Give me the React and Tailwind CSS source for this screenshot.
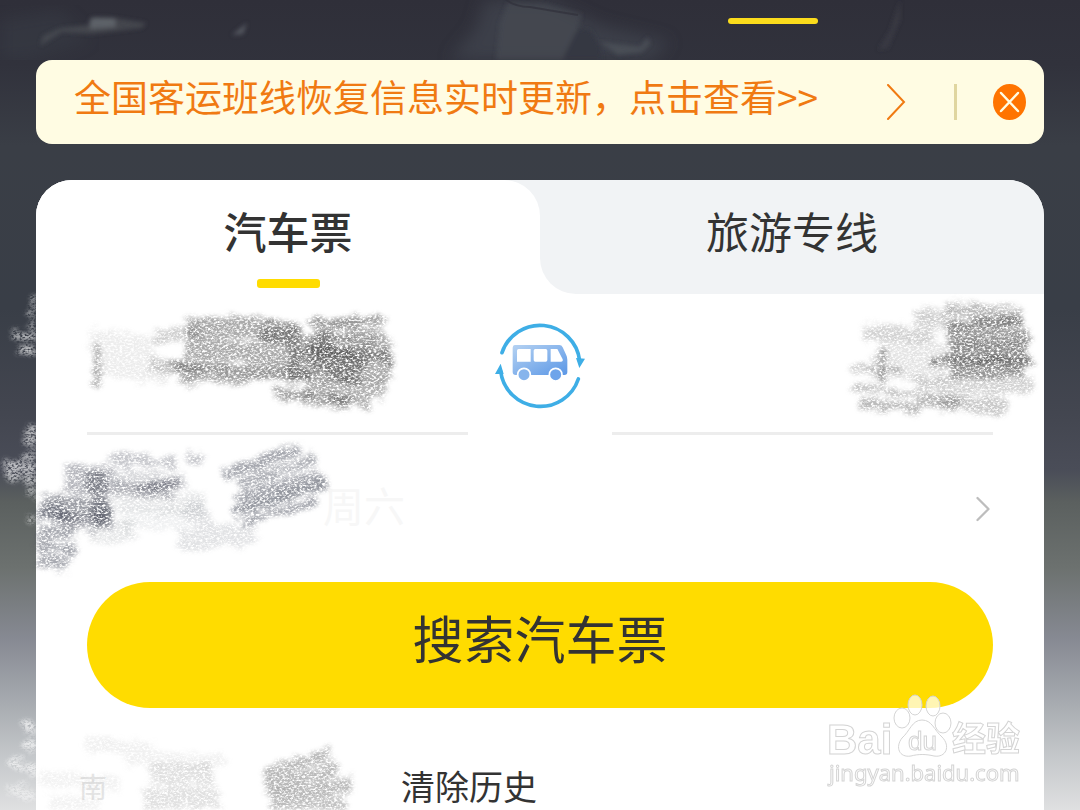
import { useState } from "react"
import { ChevronRight } from "lucide-react"

const leftStrokes = [
    // departure city
    { d: "M97 345 L97 388", w: 6, c: "#555", o: 0.5 },
    { d: "M90 342 L155 350 M95 362 L170 372", w: 26, c: "#777", o: 0.13 },
    { d: "M155 338 L200 332 M150 365 L200 372", w: 14, c: "#777", o: 0.35 },
    { d: "M186 330 L245 326 L300 336", w: 22, c: "#555", o: 0.5 },
    { d: "M186 350 L240 350 L300 365", w: 20, c: "#555", o: 0.5 },
    { d: "M172 366 L250 371 L310 378", w: 12, c: "#444", o: 0.55 },
    { d: "M180 379 L250 380", w: 8, c: "#555", o: 0.5 },
    { d: "M262 332 L310 345 L390 350", w: 24, c: "#444", o: 0.45 },
    { d: "M290 362 L392 366", w: 34, c: "#444", o: 0.45 },
    { d: "M312 351 L362 374", w: 30, c: "#444", o: 0.5 },
    { d: "M275 393 L350 403", w: 12, c: "#555", o: 0.55 },
    { d: "M305 386 L385 390", w: 18, c: "#555", o: 0.45 },
    { d: "M330 398 L370 404", w: 12, c: "#555", o: 0.45 },
    { d: "M312 324 L384 322", w: 10, c: "#444", o: 0.55 },
    { d: "M312 335 L384 335", w: 9, c: "#555", o: 0.5 },
    // travel date
    { d: "M65 473 L112 475 M66 486 L170 490", w: 15, c: "#4d5160", o: 0.4 },
    { d: "M108 459 L176 463 M186 459 L202 459", w: 12, c: "#4d5160", o: 0.32 },
    { d: "M110 476 L185 480", w: 14, c: "#4d5160", o: 0.22 },
    { d: "M138 487 L180 485", w: 9, c: "#3d4150", o: 0.45 },
    { d: "M94 470 L104 524", w: 18, c: "#2f3342", o: 0.4 },
    { d: "M42 506 L112 510", w: 22, c: "#3d4150", o: 0.5 },
    { d: "M60 520 L112 524", w: 14, c: "#3d4150", o: 0.45 },
    { d: "M36 510 L70 515 M36 530 L75 532 M36 545 L76 550 M40 561 L68 563", w: 13, c: "#505462", o: 0.5 },
    { d: "M115 498 L205 505 M90 532 L135 530", w: 24, c: "#70747f", o: 0.16 },
    { d: "M120 518 L190 520", w: 22, c: "#70747f", o: 0.1 },
    { d: "M192 505 L212 540 M180 542 L255 532", w: 22, c: "#70747f", o: 0.2 },
    { d: "M226 475 L300 449", w: 12, c: "#4d5160", o: 0.5 },
    { d: "M238 485 L316 460", w: 11, c: "#4d5160", o: 0.45 },
    { d: "M236 499 L322 474", w: 12, c: "#4d5160", o: 0.5 },
    { d: "M232 513 L326 484", w: 11, c: "#3d4150", o: 0.55 },
    { d: "M241 523 L318 500", w: 8, c: "#4d5160", o: 0.5 },
    // search history
    { d: "M86 745 L150 748 M125 758 L225 762", w: 14, c: "#888", o: 0.12 },
    { d: "M150 776 L212 774 M142 800 L218 797", w: 22, c: "#777", o: 0.22 },
    { d: "M40 778 L120 785 M50 800 L100 806", w: 16, c: "#999", o: 0.12 },
    { d: "M264 776 L330 752", w: 12, c: "#666", o: 0.45 },
    { d: "M266 787 L340 768", w: 14, c: "#666", o: 0.45 },
    { d: "M272 798 L352 784", w: 15, c: "#666", o: 0.45 },
    { d: "M270 812 L346 802", w: 14, c: "#666", o: 0.4 },
    // light marks over the backdrop
    { d: "M30 301 L36 299 M28 311 L36 313 M30 326 L36 326", w: 9, c: "#fff", o: 0.6 },
    { d: "M11 336 L36 337 M18 350 L36 350", w: 7, c: "#fff", o: 0.65 },
    { d: "M27 433 L36 430 M22 442 L36 441 M23 457 L36 457", w: 10, c: "#fff", o: 0.6 },
    { d: "M3 463 L36 471", w: 9, c: "#fff", o: 0.65 },
    { d: "M8 475 L36 481 M29 491 L36 493 M28 518 L36 521", w: 8, c: "#fff", o: 0.6 },
    { d: "M24 723 L36 733 M22 742 L36 748 M10 762 L36 772", w: 9, c: "#fff", o: 0.7 },
    { d: "M8 788 L36 795", w: 11, c: "#fff", o: 0.5 },
]

// drawn in a 240 wide box that hangs on the right edge
const rightStrokes = [
    { d: "M24 333 L95 335", w: 15, c: "#777", o: 0.32 },
    { d: "M73 317 L110 320", w: 16, c: "#666", o: 0.32 },
    { d: "M108 309 L182 314", w: 14, c: "#555", o: 0.4 },
    { d: "M108 325 L182 322", w: 11, c: "#333", o: 0.6 },
    { d: "M108 337 L190 337", w: 15, c: "#444", o: 0.55 },
    { d: "M112 352 L188 352", w: 17, c: "#333", o: 0.55 },
    { d: "M90 362 L194 362", w: 8, c: "#333", o: 0.6 },
    { d: "M110 373 L184 371", w: 13, c: "#444", o: 0.55 },
    { d: "M36 350 L110 355 M30 366 L105 372", w: 24, c: "#777", o: 0.2 },
    { d: "M43 347 L43 382", w: 6, c: "#444", o: 0.5 },
    { d: "M10 368 L60 370 M12 387 L75 395", w: 8, c: "#555", o: 0.35 },
    { d: "M75 386 L192 385", w: 16, c: "#777", o: 0.32 },
    { d: "M20 403 L80 408 M75 400 L120 404", w: 11, c: "#555", o: 0.42 },
    { d: "M100 402 L167 407", w: 17, c: "#666", o: 0.35 },
]

const Smudge = ({ strokes, className, width }) => {
    return (
        <svg className={className} viewBox={`0 0 ${width} 810`} fill="none" aria-hidden="true">
            <g filter="url(#chalk)">
                {
                    strokes.map((s, i) => {
                        return <path key={i} d={s.d} stroke={s.c} strokeWidth={s.w} strokeOpacity={s.o} strokeLinejoin="round" />
                    })
                }
            </g>
        </svg>
    )
}

const ChalkFilter = () => (
    <svg className="absolute h-0 w-0" aria-hidden="true">
        <filter id="chalk" x="0" y="0" width="1080" height="810" filterUnits="userSpaceOnUse" colorInterpolationFilters="sRGB">
            <feTurbulence type="fractalNoise" baseFrequency="0.06 0.25" numOctaves="3" seed="4" result="wave" />
            <feDisplacementMap in="SourceGraphic" in2="wave" scale="18" xChannelSelector="R" yChannelSelector="G" result="rough" />
            <feGaussianBlur in="rough" stdDeviation="2" result="soft" />
            <feTurbulence type="fractalNoise" baseFrequency="0.35 0.55" numOctaves="4" seed="9" />
            <feColorMatrix values="0 0 0 0 0  0 0 0 0 0  0 0 0 0 0  3.2 0 0 0 -0.85" result="grain" />
            <feComposite in="soft" in2="grain" operator="in" />
        </filter>
    </svg>
)

const Backdrop = () => (
    <svg className="absolute left-0 top-0 -z-10 h-[60px] w-full" viewBox="0 0 1080 60" preserveAspectRatio="xMidYMin slice" aria-hidden="true">
        <defs>
            <filter id="mist"><feGaussianBlur stdDeviation="2" /></filter>
            <filter id="haze"><feGaussianBlur stdDeviation="8" /></filter>
        </defs>
        <path d="M0 20 L60 10 L90 40 L30 60 L0 60Z" fill="#3b4148" opacity=".4" filter="url(#haze)" />
        <path d="M450 60 L476 28 L484 0 L550 0 L600 25 L670 42 L650 60Z" fill="#454952" opacity=".6" filter="url(#haze)" />
        <g filter="url(#mist)">
            <path d="M496 60 L500 22 L508 2 L545 4 L582 14 L576 34 L562 60Z" fill="#4a4f58" opacity=".5" />
            <path d="M578 28 L590 30 L600 46 L602 60 L562 60Z" fill="#343842" />
            <path d="M600 42 L640 47 L648 37 L650 44 L642 52 L618 55Z" fill="#50545d" opacity=".7" />
            <path d="M40 46 L43 36 L60 28 L88 25 L94 17 L116 18 L146 23 L142 28 L92 34 L62 32Z" fill="#4b4e56" opacity=".7" />
            <path d="M90 18 L115 18 L116 27 L90 29Z" fill="#6a6d74" opacity=".7" />
            <path d="M232 35 L247 23 L243 34Z" fill="#555861" />
            <path d="M900 0 L890 30 L878 50 L888 48 L900 20Z" fill="#40424c" opacity=".5" />
        </g>
        <path d="M506 0 Q516 7 530 7 L578 15" stroke="#30313b" strokeWidth="2" fill="none" opacity=".7" />
    </svg>
)

const SwapIcon = () => (
    <svg width="140" height="130" viewBox="0 0 420 390" fill="none" aria-hidden="true">
        <defs>
            <linearGradient id="bus" x1="0" y1="0" x2="1" y2="1">
                <stop offset="0" stopColor="#b5d2f2" />
                <stop offset="1" stopColor="#5b97e6" />
            </linearGradient>
        </defs>
        <g stroke="#3eaee6" strokeWidth="11" strokeLinecap="round">
            <path d="M96 158 A120 120 0 0 1 329 182" />
            <path d="M92 214 A120 120 0 0 0 325 237" />
        </g>
        <path d="M318 174 L345 176 L328 204 Z M75 222 L92 191 L101 222 Z" fill="#3eaee6" />
        <path d="M134 135 H268 Q275 135 278 142 L289 166 Q292 172 292 180 V216 Q292 225 283 225 H137 Q128 225 128 216 V143 Q128 135 134 135Z" fill="url(#bus)" />
        <path d="M146 147 H182 V185 H141 V152 Q141 147 146 147Z M196 147 H227 Q232 147 232 152 V180 Q232 185 227 185 H196 Q191 185 191 180 V152 Q191 147 196 147Z M242 147 H262 L278 178 Q280 185 273 185 H242Z" fill="#fff" />
        <g stroke="#fff" strokeWidth="5">
            <circle cx="162" cy="224" r="19" fill="#86b4ec" />
            <circle cx="257" cy="224" r="19" fill="#6ea4ea" />
        </g>
    </svg>
)

const Watermark = () => (
    <svg className="pointer-events-none absolute bottom-0 right-[50px] h-[120px] w-[210px]" viewBox="820 690 210 120" fill="#fff" stroke="#d4d4d4" strokeWidth="1">
        <g fillOpacity=".7">
            <ellipse cx="902" cy="718" rx="8" ry="10" />
            <ellipse cx="915" cy="705" rx="7" ry="10" />
            <ellipse cx="933" cy="706" rx="7" ry="10" />
            <ellipse cx="943" cy="723" rx="8" ry="10" />
            <path d="M922 720 C932 720 934 730 942 737 C951 746 946 758 934 756 C926 754 918 754 911 756 C899 758 895 747 902 738 C910 731 912 720 922 720Z" />
        </g>
        <text x="827" y="754" fontSize="42" fontWeight="700" fontFamily="Liberation Sans, sans-serif">Bai</text>
        <text x="908" y="750" fontSize="26" fontFamily="Liberation Sans, sans-serif">du</text>
        <text x="952" y="751" fontSize="34" fontWeight="700" fontFamily="Noto Sans CJK SC, sans-serif">经验</text>
        <text x="829" y="781" fontSize="22" fontFamily="Noto Sans, sans-serif">jingyan.baidu.com</text>
    </svg>
)

const App = () => {
    let [notice, setNotice] = useState(true)

    return (
        <main className="relative isolate flex min-h-screen flex-col overflow-hidden bg-[linear-gradient(#2f2f39_0%,#31323c_8%,#3a3e46_18%,#393e47_38%,#434650_51%,#4a4d58_58%,#5b605f_62%,#6c716f_70%,#878a93_79%,#a8acb1_87%,#c3c6c9_93%,#dfe0e1_100%)] px-9 font-['Noto_Sans_CJK_SC',sans-serif] text-[#333]">
            <ChalkFilter />
            <Backdrop />

            <nav className="flex h-[60px] shrink-0 justify-end pr-[226px] pt-[18px]">
                <span className="h-1.5 w-[90px] rounded-full bg-[#fbdc1c]"></span>
            </nav>

            {
                notice &&
                <div className="mb-9 flex h-[84px] shrink-0 items-center rounded-2xl bg-[#fffce3] pl-[38px] pr-[18px] text-[#f07a12]">
                    <a href="#news" className="flex grow items-center justify-between whitespace-nowrap text-[37px] leading-[48px]">
                        <span className="pb-3">全国客运班线恢复信息实时更新，点击查看&gt;&gt;</span>
                        <svg width="20" height="36" viewBox="0 0 20 36" fill="none" stroke="currentColor" strokeWidth="2" strokeLinecap="round" aria-hidden="true">
                            <path d="M2 1 L18 18 L2 35" />
                        </svg>
                    </a>
                    <span className="ml-12 mr-9 h-9 w-[3px] bg-[#e0d6a0]"></span>
                    <button aria-label="关闭" onClick={() => setNotice(false)}>
                        <svg width="33" height="36" viewBox="0 0 33 36" fill="none">
                            <ellipse cx="16.5" cy="18" rx="16.5" ry="18" fill="#ff7400" />
                            <path d="M8 9 L25 27 M25 9 L8 27" stroke="#fffce3" strokeWidth="2.5" strokeLinecap="round" />
                        </svg>
                    </button>
                </div>
            }

            <section className="flex grow flex-col overflow-hidden rounded-t-[36px] bg-white">
                <div className="grid h-[114px] shrink-0 grid-cols-2 text-[43px] leading-[56px]">
                    <div className="bg-[#f1f3f5]">
                        <button className="flex h-full w-full flex-col items-center gap-[21px] rounded-tr-[36px] bg-white pt-[22px] font-medium">
                            汽车票
                            <span className="h-[9px] w-[63px] rounded-[3px] bg-[#ffdc00]"></span>
                        </button>
                    </div>
                    <button className="flex justify-center rounded-bl-[36px] bg-[#f1f3f5] pt-[22px]">旅游专线</button>
                </div>

                <div className="px-[51px]">
                    <div className="grid grid-cols-[1fr_144px_1fr]">
                        <button aria-label="出发城市" className="h-[141px] border-b-[3px] border-[#ededed]"></button>
                        <button aria-label="交换城市" className="flex items-center justify-center">
                            <SwapIcon />
                        </button>
                        <button aria-label="到达城市" className="h-[141px] border-b-[3px] border-[#ededed]"></button>
                    </div>

                    <button className="flex h-[147px] w-full items-center justify-between pl-[236px] text-[41px] text-[#f7f7f7]">
                        <span className="pb-2">周六</span>
                        <ChevronRight className="-mr-3 size-11 text-[#bdbdbd]" strokeWidth={1.25} />
                    </button>

                    <button className="h-[126px] w-full rounded-full bg-[#ffdc00] pb-4 text-[51px] leading-[60px]">搜索汽车票</button>

                    <div className="flex h-[102px] items-end text-[34px] leading-[48px]">
                        <span className="w-[314px] -ml-2 text-[28px] text-[#e6e6e6]">南</span>
                        <button className="ml-2">清除历史</button>
                    </div>
                </div>
            </section>

            <Smudge strokes={leftStrokes} width={420} className="pointer-events-none absolute left-0 top-0 h-[810px] w-[420px]" />
            <Smudge strokes={rightStrokes} width={240} className="pointer-events-none absolute right-0 top-0 h-[810px] w-[240px]" />
            <Watermark />
        </main>
    )
}

export default App
